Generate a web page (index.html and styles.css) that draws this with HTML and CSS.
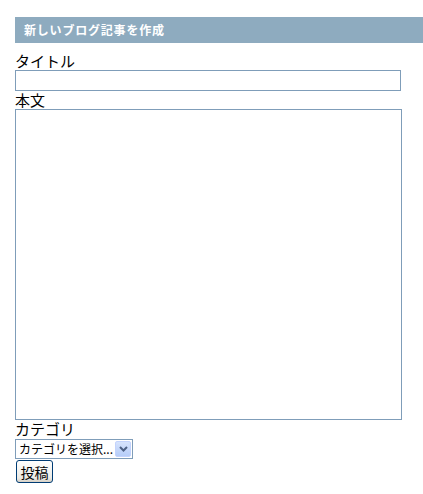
FILE: index.html
```html
<!DOCTYPE html>
<html lang="ja">
  <head>
    <meta charset="UTF-8" />
    <title>新しいブログ記事を作成</title>
    <link rel="stylesheet" href="styles.css">
  </head>
  <body>
    <div class="container">
      <h2 class="title-bar">新しいブログ記事を作成</h2>
      <form id="postForm">
        <label for="titulo">タイトル</label>
        <input type="text" id="titulo" class="title-input" />

        <label for="honbun">本文</label>
        <textarea id="honbun" class="body-input"></textarea>

        <label for="category">カテゴリ</label>
        <div class="select-box">
          <span class="select-text">カテゴリを選択...</span>
          <span class="select-arrow">
            <svg width="9" height="6" viewBox="0 0 9 6">
              <path d="M1 1 L4.5 4.5 L8 1" fill="none" stroke="#4d6185" stroke-width="2" />
            </svg>
          </span>
        </div>

        <button type="submit" class="submit-btn">投稿</button>
      </form>
    </div>
  </body>
</html>
```

FILE: styles.css
```css
* {
  box-sizing: border-box;
  margin: 0;
  padding: 0;
}

body {
  font-family: "Noto Sans CJK JP", "Liberation Sans", sans-serif;
  background-color: #ffffff;
  color: #000;
}

.container {
  padding: 17px 0 0 15px;
}

.title-bar {
  height: 26px;
  background-color: #8eabbf;
  color: #ffffff;
  font-size: 12px;
  font-weight: bold;
  letter-spacing: 0.8px;
  line-height: 26px;
  padding-left: 9px;
  margin-bottom: 9px;
}

form {
  display: flex;
  flex-direction: column;
  align-items: flex-start;
}

label {
  font-size: 15px;
  line-height: 18px;
  height: 18px;
}

.title-input {
  width: 386px;
  height: 21px;
  border: 1px solid #7f9db9;
  background: #fff;
}

.body-input {
  width: 387px;
  height: 311px;
  border: 1px solid #7f9db9;
  background: #fff;
  resize: none;
}

.select-box {
  display: flex;
  align-items: center;
  width: 118px;
  height: 20px;
  border: 1px solid #7f9db9;
  padding: 1px;
  margin-top: 1px;
}

.select-text {
  flex: 1;
  font-size: 12px;
  line-height: 16px;
  padding-left: 2px;
  white-space: nowrap;
}

.select-arrow {
  width: 16px;
  height: 16px;
  background: linear-gradient(#d6e3fd, #b6cdf8);
  border: 1px solid #c3d3fd;
  border-radius: 2px;
  display: flex;
  align-items: center;
  justify-content: center;
}

.submit-btn {
  margin: 1px 0 0 1px;
  width: 37px;
  height: 23px;
  font-family: inherit;
  font-size: 14px;
  border: 1px solid #003c74;
  border-radius: 3px;
  background: linear-gradient(#ffffff, #ecebe6 80%, #d6d0c5);
  cursor: pointer;
}
```
